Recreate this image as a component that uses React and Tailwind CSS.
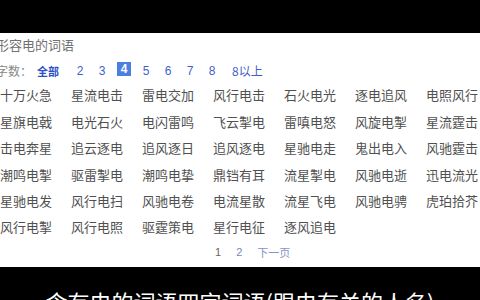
import React from "react";

const words = [
  ["十万火急", "星流电击", "雷电交加", "风行电击", "石火电光", "逐电追风", "电照风行"],
  ["星旗电戟", "电光石火", "电闪雷鸣", "飞云掣电", "雷嗔电怒", "风旋电掣", "星流霆击"],
  ["击电奔星", "追云逐电", "追风逐日", "追风逐电", "星驰电走", "鬼出电入", "风驰霆击"],
  ["潮鸣电掣", "驱雷掣电", "潮鸣电挚", "鼎铛有耳", "流星掣电", "风驰电逝", "迅电流光"],
  ["星驰电发", "风行电扫", "风驰电卷", "电流星散", "流星飞电", "风驰电骋", "虎珀拾芥"],
  ["风行电掣", "风行电照", "驱霆策电", "星行电征", "逐风追电"],
];

const counts = ["2", "3", "4", "5", "6", "7", "8"];

const App = () => {
  return (
    <div
      className="w-[480px] h-[300px] overflow-hidden bg-white flex flex-col"
      style={{ fontFamily: '"Noto Sans CJK SC", "Liberation Sans", sans-serif' }}
    >
      <div className="h-[33px] bg-black shrink-0" />

      <div className="h-[234px] shrink-0 flex flex-col">
        <div className="h-[24px] flex items-center ml-[-4px] text-[13px] text-[#707070]">
          形容电的词语
        </div>

        <div className="h-[25px] pt-[3px] flex items-center ml-[-4px] text-[12px]">
          <span className="text-[#888]">字数：</span>
          <span className="ml-[5px] text-[11px] font-bold text-[#2f4fc4]">全部</span>
          <div className="ml-[10px] flex">
            {counts.map((n) => (
              <span
                key={n}
                className="w-[22px] flex justify-center"
                style={{ fontFamily: '"Liberation Sans", sans-serif' }}
              >
                {n === "4" ? (
                  <span className="w-[14px] h-[14px] bg-[#4a7fe0] text-white font-bold flex items-center justify-center leading-none">
                    4
                  </span>
                ) : (
                  <span className="text-[#3f5fc8]">{n}</span>
                )}
              </span>
            ))}
          </div>
          <span className="ml-[9px] text-[#3f5fc8]">8以上</span>
        </div>

        <div className="grid grid-cols-[repeat(7,71px)] auto-rows-[26.4px] text-[13px] text-[#505050] whitespace-nowrap">
          {words.flat().map((w, i) => (
            <div key={i} className="flex items-center">
              {w}
            </div>
          ))}
        </div>

        <div className="h-[23px] flex items-center pl-[215px] text-[11px]">
          <span className="text-[#666]" style={{ fontFamily: '"Liberation Sans", sans-serif' }}>1</span>
          <span className="ml-[15px] text-[#7a86b8]" style={{ fontFamily: '"Liberation Sans", sans-serif' }}>2</span>
          <span className="ml-[15px] text-[#8a93c4]">下一页</span>
        </div>
      </div>

      <div className="flex-1 bg-black pt-[23px] text-center text-white text-[22px] leading-none whitespace-nowrap">
        含有电的词语四字词语(跟电有关的人名)
      </div>
    </div>
  );
};

export default App;
